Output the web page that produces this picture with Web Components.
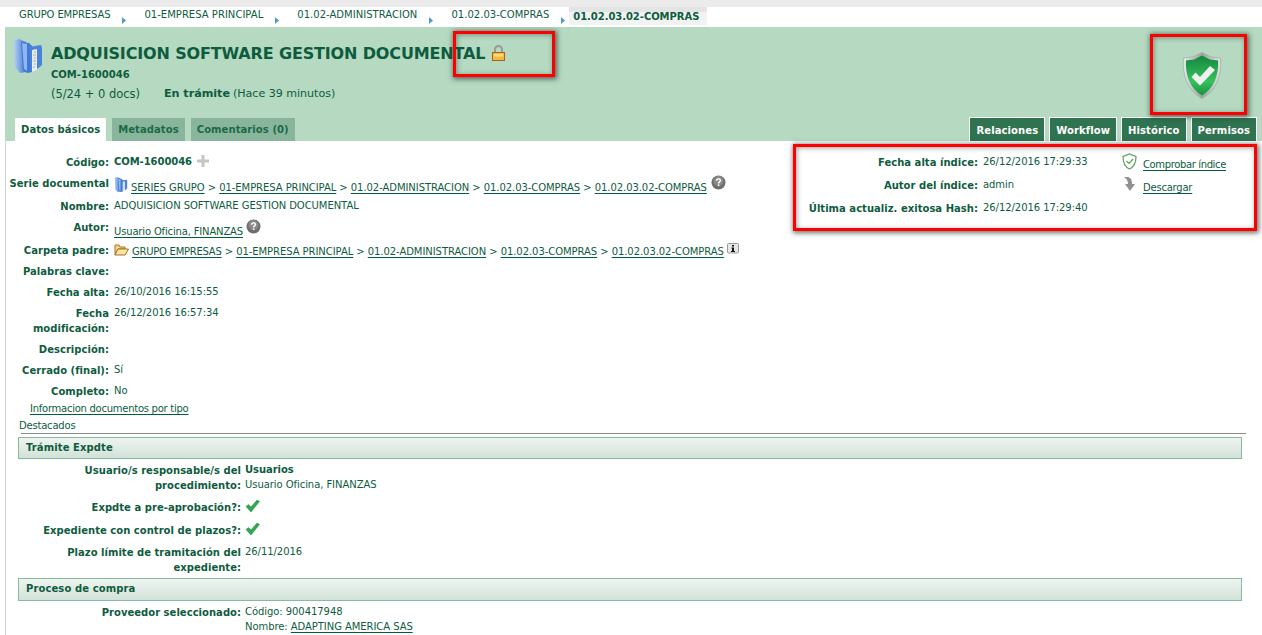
<!DOCTYPE html>
<html lang="es"><head><meta charset="utf-8"><title>Expediente</title>
<style>
html,body{margin:0;padding:0;background:#fff;overflow:hidden}
body{width:1262px;height:635px;font:10px "DejaVu Sans",Verdana,sans-serif;color:#0e5c3e;position:relative}
</style></head><body>
<app-page>
  <app-breadcrumb slot="crumbs">
    <crumb-item>GRUPO EMPRESAS</crumb-item><crumb-item>01-EMPRESA PRINCIPAL</crumb-item><crumb-item>01.02-ADMINISTRACION</crumb-item><crumb-item>01.02.03-COMPRAS</crumb-item><crumb-item current>01.02.03.02-COMPRAS</crumb-item>
  </app-breadcrumb>
  <doc-header slot="header"></doc-header>
  <form-panel slot="main"></form-panel>
</app-page>
<red-box style="left:453px;top:31px;width:102px;height:46px"></red-box>
<red-box style="left:1150px;top:34px;width:97px;height:81px"></red-box>
<red-box style="left:793px;top:144px;width:464px;height:87px"></red-box>
<script>
let uid=0;
const folderSvg=(w,h)=>{const i="f"+(++uid);return `<svg width="${w}" height="${h}" viewBox="0 0 28 34" aria-hidden="true"><defs><linearGradient id="${i}" x1="0" x2="1"><stop offset="0" stop-color="#b4d0f5"/><stop offset="1" stop-color="#3f77d2"/></linearGradient></defs><path d="M0 2 L5 0 L12 3 L12 33 L6 34 L1 28 Z" fill="url(#${i})"/><path d="M7 3 L15 4 L18 7 L18 33 L13 34 L9 31 Z" fill="#3f78d8"/><path d="M8 4 L13 5 L13 32 L10 30 Z" fill="#8fb6ee"/><path d="M15 8 L27 6 L28 9 L28 26 L22 31 L17 33 Z" fill="#4a83dc"/><path d="M18 11 L23 10 L23 31 L18 33 Z" fill="#e9ecec"/><path d="M20 13h2M19 16h3M20 19h2M19 22h3M20 25h2M19 28h2" stroke="#a6b0b0" stroke-width="1"/></svg>`};
const helpIcon=`<svg width="15" height="15" viewBox="0 0 15 15" aria-hidden="true"><circle cx="7.500" cy="7.500" r="7" fill="#6e6e6e"/><circle cx="7.500" cy="6" r="5" fill="#8a8a8a"/><path d="M5.600 5.700c0-2.400 3.800-2.400 3.800-.2 0 1.400-1.800 1.400-1.800 2.900" fill="none" stroke="#fff" stroke-width="1.500"/><rect x="6.800" y="9.500" width="1.600" height="1.600" fill="#fff"/></svg>`;
const checkIcon=`<svg width="15" height="14" viewBox="0 0 15 14" aria-hidden="true"><path d="M1 7.500 L3.500 5.500 L6 8 L12 1 L14.500 2.500 L6 13 Z" fill="#2fa84f" stroke="#1c8a3c" stroke-width=".5"/></svg>`;
const def=(name,css,html,init)=>customElements.define(name,class extends HTMLElement{
  connectedCallback(){ if(this.shadowRoot) return; const r=this.attachShadow({mode:"open"}); r.innerHTML=`<style>${css}</style>`+(typeof html==="function"?html(this):html); init&&init(this,r);} });
const linkCss=`a{color:#0e5c3e;text-decoration:underline;text-decoration-color:#006035;text-underline-offset:2px}`;

def("app-page",`:host{display:block;width:1262px;height:635px;background:#fff}
 .top{height:7px;background:#ebebeb}`,
 `<div class="top"></div><slot name="crumbs"></slot><slot name="header"></slot><slot name="main"></slot>`);

def("app-breadcrumb",`:host{display:flex;height:20px;padding-left:19px;background:#fff;align-items:flex-start}`,`<slot></slot>`);
def("crumb-item",`:host{display:flex;align-items:flex-start;height:18px;line-height:16px;letter-spacing:.03px}
 :host(:first-child){letter-spacing:-.12px}
 :host(:first-child) svg{display:none}
 svg{flex:none;margin:10px 18px 0 0}
 span{display:block}
 :host(:not([current])) span{padding-right:12px}
 :host([current]){font-weight:bold;letter-spacing:-.05px}
 :host([current]) svg{margin-right:4px}
 :host([current]) span{background:linear-gradient(#e4e4e4 0,#e4e4e4 5px,#f2f2f2 5px);padding:0 8px 0 4px;line-height:20px;height:18px}`,
 e=>`<svg width="4" height="7" viewBox="0 0 4 7"><path d="M0 0 L4 3.500 L0 7Z" fill="#4b9cc9"/></svg><span><slot></slot></span>`);

def("doc-header",`:host{display:block;height:114px;margin-left:5px;background:#b5d9c1;position:relative;box-sizing:border-box;padding-top:12px}
 .head{display:flex;height:79px}
 .ic{padding:0 0 0 9px;width:37px;flex:none}
 h1{margin:0;font:bold 16px/26px "DejaVu Sans",Verdana,sans-serif;display:flex;align-items:center;gap:7px;height:30px;letter-spacing:-.15px}
 h1 svg{margin-top:-3px}
 .code{font-weight:bold;font-size:10px;line-height:12px}
 .st{line-height:16px;margin-top:5px;display:flex;letter-spacing:-.03px}
 .st .a{font-size:11.500px}.st .c{font-size:11.100px}
 .st b{margin-left:24px;font-size:11.200px;margin-right:3px}
 .shield{position:absolute;left:1177px;top:25px}
 .tabs{display:flex;align-items:flex-end;height:23px;padding-left:10px}
 tab-btn+tab-btn{margin-left:6px}
 .right{margin-left:auto;display:flex;gap:4px;padding-right:5px}`,
 `<div class="head"><div class="ic">${folderSvg(28,34)}</div><div>
   <h1><span>ADQUISICION SOFTWARE GESTION DOCUMENTAL</span><svg width="13" height="16" viewBox="0 0 13 16" aria-hidden="true"><path d="M3 8V4.500a3.500 3.500 0 0 1 7 0V8" fill="none" stroke="#9a9a9a" stroke-width="2"/><rect x=".5" y="7.500" width="12" height="8" fill="#f6b83e" stroke="#a8641c"/><rect x="2" y="9" width="9" height="2.500" fill="#fbd97c"/></svg></h1>
   <div class="code">COM-1600046</div>
   <div class="st"><span class="a">(5/24 + 0 docs)</span><b>En trámite</b><span class="c">(Hace 39 minutos)</span></div></div></div>
  <svg class="shield" width="40" height="47" viewBox="0 0 40 47" aria-hidden="true"><defs><linearGradient id="sg" x1="0" x2="0" y1="0" y2="1"><stop offset="0" stop-color="#14873f"/><stop offset=".65" stop-color="#35c25c"/><stop offset="1" stop-color="#17903f"/></linearGradient><linearGradient id="sr" x1="0" x2="1"><stop offset="0" stop-color="#e8ebe8"/><stop offset=".5" stop-color="#9aa39d"/><stop offset="1" stop-color="#dfe3df"/></linearGradient></defs><path d="M20 .5 L29 5 L38.500 6 C40 24 34 39 20 46.500 C6 39 0 24 1.500 6 L11 5 Z" fill="url(#sr)" stroke="#98a29c" stroke-width=".6"/><path d="M20 3.500 L28 7.500 L36 8.500 C37 24 31 37 20 43.500 C9 37 3 24 4 8.500 L12 7.500 Z" fill="url(#sg)"/><path d="M9.500 25 L13.500 20.500 L18 25 L28 14 L33 18 L18 33.500 Z" fill="#eef1ee"/></svg>
  <div class="tabs"><tab-btn active>Datos básicos</tab-btn><tab-btn>Metadatos</tab-btn><tab-btn>Comentarios (0)</tab-btn>
   <div class="right"><dark-btn>Relaciones</dark-btn><dark-btn>Workflow</dark-btn><dark-btn>Histórico</dark-btn><dark-btn>Permisos</dark-btn></div></div>`);
def("tab-btn",`:host{display:block;height:23px;line-height:24px;padding:0 6px;background:#8ab59d;font-weight:bold;font-size:10px;color:#1a6b45;letter-spacing:.08px}
 :host([active]){background:#fff;color:#0e5c3e}`,`<slot></slot>`);
def("dark-btn",`:host{display:block;height:23px;line-height:25px;padding:0 6px;background:#2f7350;border:1px solid #fff;border-bottom:0;font-weight:bold;font-size:10px;color:#fff;letter-spacing:.1px}`,`<slot></slot>`);

def("form-row",`:host{display:grid;grid-template-columns:var(--lw,103px) 1fr;column-gap:var(--g,5px);height:var(--h,22px);box-sizing:border-box;padding-top:4px;line-height:15px}
 .l{font-weight:bold;font-size:10px;text-align:right;letter-spacing:.03px}
 .v{font-size:10px;display:block;white-space:nowrap;position:relative;top:-1px;letter-spacing:-.06px}`,
 e=>`<div class="l">${e.getAttribute("label")}</div><div class="v"><slot></slot></div>`);

def("section-bar",`:host{display:block;box-sizing:border-box;height:var(--h,22px);line-height:20px;margin:0 20px 0 12px;border:1px solid #84bb9c;background:linear-gradient(#eef4f0,#d2e2d8);padding-left:7px;font-weight:bold;font-size:10px;letter-spacing:.1px}`,`<slot></slot>`);

def("index-panel",`:host{display:block;position:relative;width:460px;padding-top:3px}
 .g{display:grid;grid-template-columns:185px 1fr;column-gap:5px;grid-auto-rows:23px;width:340px}
 .l{font-weight:bold;font-size:10px;text-align:right;letter-spacing:.03px;line-height:18px}
 .v{font-size:10px;line-height:16px;letter-spacing:-.06px}
 .acts{position:absolute;left:329px;top:2px;display:grid;row-gap:6px}
 .a{display:flex;gap:6px;align-items:flex-start;height:17px;line-height:24px;font-size:10px}
 ${linkCss}`,
 `<div class="g"><div class="l">Fecha alta índice:</div><div class="v">26/12/2016 17:29:33</div>
 <div class="l">Autor del índice:</div><div class="v">admin</div>
 <div class="l">Última actualiz. exitosa Hash:</div><div class="v">26/12/2016 17:29:40</div></div>
 <div class="acts"><div class="a"><svg width="15" height="17" viewBox="0 0 15 17" aria-hidden="true"><path d="M7.500 1 L14 3.500 C14 10 12 14 7.500 16 C3 14 1 10 1 3.500Z" fill="none" stroke="#5aa05a" stroke-width="1.200"/><path d="M4.500 8 L7 10.500 L11 6" fill="none" stroke="#5aa05a" stroke-width="1.200"/></svg><a href="#" style="letter-spacing:-.37px">Comprobar índice</a></div>
 <div class="a"><svg width="15" height="17" viewBox="0 0 15 17" aria-hidden="true"><path d="M2 1 L6 1 C9 2 10 4 10 8 L13 8 L8 15 L3 8 L6 8 C6 5 5 3 2 1Z" fill="#909090"/></svg><a href="#" style="letter-spacing:-.22px">Descargar</a></div></div>`);

def("form-panel",`:host{display:block;position:relative;background:#fff;margin-left:5px;border-left:1px solid #cbd8d0;height:494px;box-sizing:border-box;padding-top:10px}
 .top{display:flex}
 .left{width:787px;flex:none}
 .link{display:block;width:max-content;height:14px;line-height:14px;margin-left:24px;letter-spacing:-.26px}
 .dest{height:14px;line-height:14px;margin:3px 0 0 13px;letter-spacing:-.2px}
 .rule{height:1px;background:#8a8f8c;margin:0 16px 3px 15px}
 .sec{--lw:235px;--g:4px}
 .ico{display:inline-block;vertical-align:-1px;margin-right:3px}
 .plus{display:inline-block;vertical-align:-2px;margin-left:5px}
 ${linkCss}`,
 `<div class="top"><div class="left">
 <form-row label="Código:" style="--h:21px"><b>COM-1600046</b><svg class="plus" width="12" height="12" viewBox="0 0 12 12" aria-hidden="true"><path d="M4.500 0h3v4.500H12v3H7.500V12h-3V7.500H0v-3h4.500z" fill="#c6c6c6"/></svg></form-row>
 <form-row label="Serie documental" style="--h:23px"><span class="ico">${folderSvg(14,15)}</span><a href="#">SERIES GRUPO</a> &gt; <a href="#">01-EMPRESA PRINCIPAL</a> &gt; <a href="#">01.02-ADMINISTRACION</a> &gt; <a href="#">01.02.03-COMPRAS</a> &gt; <a href="#">01.02.03.02-COMPRAS</a> <span style="vertical-align:1px;display:inline-block;margin-left:1px">${helpIcon}</span></form-row>
 <form-row label="Nombre:" style="--h:21px">ADQUISICION SOFTWARE GESTION DOCUMENTAL</form-row>
 <form-row label="Autor:" style="--h:23px"><a href="#" style="letter-spacing:-.16px">Usuario Oficina, FINANZAS</a> <span style="vertical-align:1px;display:inline-block">${helpIcon}</span></form-row>
 <form-row label="Carpeta padre:" style="--h:21px"><span class="ico"><svg width="15" height="12" viewBox="0 0 15 12" aria-hidden="true"><path d="M1 1h4l1 2h5v2H4L1 11Z" fill="#f4d78a" stroke="#a8701f"/><path d="M1 11 L4 5 H14.500 L11 11Z" fill="#fbe6a6" stroke="#a8701f"/></svg></span><a href="#" style="letter-spacing:-.25px">GRUPO EMPRESAS</a> &gt; <a href="#">01-EMPRESA PRINCIPAL</a> &gt; <a href="#">01.02-ADMINISTRACION</a> &gt; <a href="#">01.02.03-COMPRAS</a> &gt; <a href="#">01.02.03.02-COMPRAS</a> <span style="display:inline-block;vertical-align:1px"><svg width="12" height="12" viewBox="0 0 12 12" aria-hidden="true"><rect x=".5" y="1.500" width="11" height="9.500" rx="1" fill="#e6e6e6" stroke="#999"/><path d="M5 3h2v1.500H5zM4.500 5.500H7V9h1v1H4V9h1V6.500h-.5z" fill="#111"/></svg></span></form-row>
 <form-row label="Palabras clave:" style="--h:21px"></form-row>
 <form-row label="Fecha alta:" style="--h:21px">26/10/2016 16:15:55</form-row>
 <form-row label="Fecha modificación:" style="--h:36px">26/12/2016 16:57:34</form-row>
 <form-row label="Descripción:" style="--h:21px"></form-row>
 <form-row label="Cerrado (final):" style="--h:21px">Sí</form-row>
 <form-row label="Completo:" style="--h:22px">No</form-row>
 </div><index-panel></index-panel></div>
 <a class="link" href="#">Informacion documentos por tipo</a>
 <div class="dest">Destacados</div><div class="rule"></div>
 <section-bar style="--h:22px">Trámite Expdte</section-bar>
 <div class="sec">
 <form-row label="Usuario/s responsable/s del procedimiento:" style="--h:37px"><b>Usuarios</b><br>Usuario Oficina, FINANZAS</form-row>
 <form-row label="Expdte a pre-aprobación?:" style="--h:23px">${checkIcon}</form-row>
 <form-row label="Expediente con control de plazos?:" style="--h:22px">${checkIcon}</form-row>
 <form-row label="Plazo límite de tramitación del expediente:" style="--h:37px">26/11/2016</form-row>
 </div>
 <section-bar style="--h:23px">Proceso de compra</section-bar>
 <div class="sec"><form-row label="Proveedor seleccionado:" style="--h:34px">Código: 900417948<br>Nombre: <a href="#">ADAPTING AMERICA SAS</a></form-row></div>`);

def("red-box",`:host{display:block;position:absolute;box-sizing:border-box;border:3px solid #f00;box-shadow:1px 1px 5px 1px rgba(40,50,45,.7),inset 1px 1px 5px rgba(40,50,45,.45);pointer-events:none}`,``);
</script>
</body></html>
